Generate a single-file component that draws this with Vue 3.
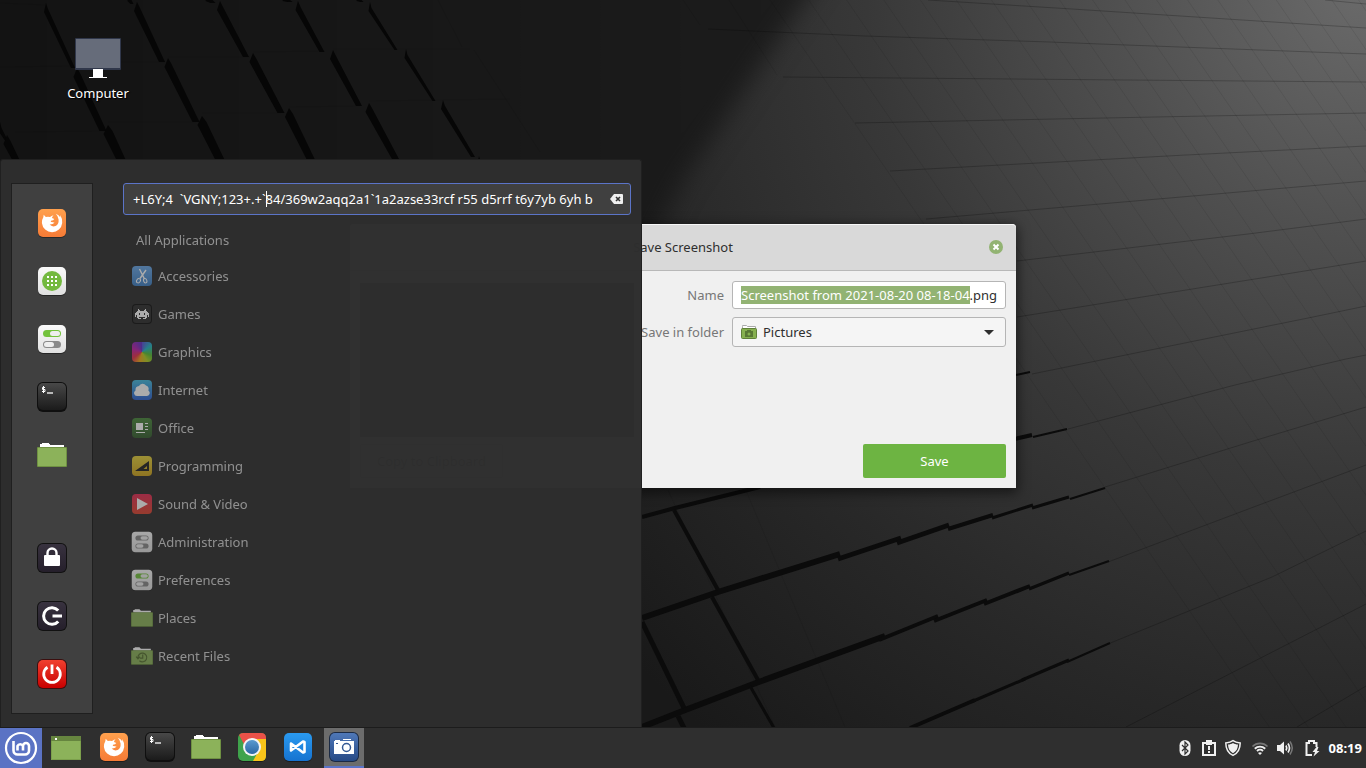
<script setup>
import { onMounted, ref } from 'vue'

const launchers = [
  { id: 'firefox', label: 'Firefox' },
  { id: 'software', label: 'Software Manager' },
  { id: 'settings', label: 'System Settings' },
  { id: 'terminal', label: 'Terminal' },
  { id: 'folder', label: 'Files' }
]
const session = [
  { id: 'lock', label: 'Lock Screen' },
  { id: 'logout', label: 'Log Out' },
  { id: 'power', label: 'Quit' }
]
const categories = [
  { id: 'accessories', label: 'Accessories' },
  { id: 'games', label: 'Games' },
  { id: 'graphics', label: 'Graphics' },
  { id: 'internet', label: 'Internet' },
  { id: 'office', label: 'Office' },
  { id: 'programming', label: 'Programming' },
  { id: 'video', label: 'Sound & Video' },
  { id: 'admin', label: 'Administration' },
  { id: 'settings', label: 'Preferences' },
  { id: 'folder', label: 'Places' },
  { id: 'recent', label: 'Recent Files' }
]
const panelApps = [
  { id: 'firefox', label: 'Firefox' },
  { id: 'terminal', label: 'Terminal' },
  { id: 'folder', label: 'Files' },
  { id: 'chrome', label: 'Google Chrome' },
  { id: 'vscode', label: 'Visual Studio Code' },
  { id: 'camera', label: 'Screenshot', active: true }
]
const tray = [
  { id: 'bluetooth', label: 'Bluetooth' },
  { id: 'clipboard', label: 'Reports' },
  { id: 'shield', label: 'Updates' },
  { id: 'wifi', label: 'Network' },
  { id: 'sound', label: 'Sound' },
  { id: 'battery', label: 'Battery' }
]

const wedges = [
  [46, 3, 73, 68, 4], [137, 2, 162, 62, 6], [220, 1, 246, 57, 6], [298, 1, 322, 52, 5], [370, 2, 396, 50, 3],
  [77, 68, 103, 131, 7], [168, 58, 196, 122, 7], [253, 53, 281, 113, 7], [333, 50, 359, 106, 6], [406, 49, 434, 101, 3],
  [0, 122, 6, 140, 3], [7, 135, 18, 164, 7], [108, 125, 124, 166, 9], [202, 116, 223, 166, 9],
  [289, 108, 314, 166, 8], [369, 103, 396, 160, 7], [443, 100, 473, 157, 4], [479, 156, 484, 166, 4],
  [129, -8, 132, 4, 3], [208, -8, 213, 3, 5], [285, -8, 290, 2, 5], [358, -8, 362, 2, 3]
].map(([x1, y1, x2, y2, w]) => `${x1},${y1} ${x1 + w / 2},${y1 + 6} ${x2 + w / 2},${y2} ${x2 - w / 2},${y2} ${x1 - w / 2},${y1 + 9}`)

const rows = [
  '1325,0 1366,4', '928,0 1072,9 1366,28', '708,29 865,36 1050,42 1100,44 1366,54', '783,77 1127,80 1366,82',
  '855,123 1155,117 1366,113', '890,171 1186,155 1366,146', '926,219 1216,194 1366,181',
  '1017,261 1248,234 1366,219', '1017,317 1280,275 1366,261', '1032,374 1313,317 1366,306',
  '1068,429 1235,385 1346,359 1366,355', '1105,487 1250,442 1366,407', '1108,562 1182,534 1251,508 1366,465',
  '1108,644 1272,577 1366,531', '1126,727 1366,604', '1297,727 1366,686'
]
const seams = Array.from({ length: 24 }, (_, i) => {
  const x = 770 + 39 * i - i * i * 0.35
  return [x, 0, x + 500, 728]
})
const leftSeams = [
  '0,3 46,5', '0,67 73,66', '77,62 165,62', '168,57 250,57', '253,52 325,51', '333,49 470,49',
  '15,132 105,131', '108,122 196,122', '202,113 281,113', '289,107 360,106', '369,101 510,99',
  '438,0 462,47', '474,50 540,152', '683,0 700,25', '729,0 777,75', '668,490 775,727', '745,488 845,727'
]
const slabs = [
  ['642,517 675,508 760,487', 4], ['642,618 718,592 840,554', 6], ['838,559 901,538', 5], ['897,543 949,525', 5],
  ['948,529 993,515', 4], ['992,518 1033,505', 3], ['1032,508 1069,497', 3], ['1070,499 1105,488', 2],
  ['642,727 680,712 756,683 885,636', 6], ['879,640 938,616', 4], ['934,621 987,600', 4], ['984,604 1030,586', 4],
  ['1029,589 1069,573', 3], ['1069,575 1109,561', 2], ['910,728 975,700', 4], ['971,702 1025,679', 3],
  ['1022,680 1069,660', 3], ['1067,662 1110,643', 2], ['674,510 718,590', 4], ['712,597 758,680', 4],
  ['750,686 774,728', 3], ['642,622 684,708', 5], ['678,716 684,728', 5], ['1016,375 1030,372', 2],
  ['1010,440 1032,435', 4], ['1033,437 1067,429', 2]
]

const query = ref('+L6Y;4  `VGNY;123+.+`84/369w2aqq2a1`1a2azse33rcf r55 d5rrf t6y7yb 6yh b')
const fileName = ref('Screenshot from 2021-08-20 08-18-04.png')
const nameInput = ref(null)

onMounted(() => {
  nameInput.value.focus()
  nameInput.value.setSelectionRange(0, fileName.value.lastIndexOf('.'))
})
</script>

<template>
  <div class="desktop">
    <svg class="defs" aria-hidden="true">
      <defs>
        <linearGradient id="gOrange" x2="0" y2="1"><stop stop-color="#ffa04d" /><stop offset="1" stop-color="#f67b36" /></linearGradient>
        <linearGradient id="gWhite" x2="0" y2="1"><stop stop-color="#fafafa" /><stop offset="1" stop-color="#e0e0e0" /></linearGradient>
        <linearGradient id="gBlack" x2="0" y2="1"><stop stop-color="#484848" /><stop offset="1" stop-color="#1b1b1b" /></linearGradient>
        <linearGradient id="gPlum" x2="0" y2="1"><stop stop-color="#38323f" /><stop offset="1" stop-color="#251f2b" /></linearGradient>
        <linearGradient id="gRed" x2="0" y2="1"><stop stop-color="#f0402f" /><stop offset="1" stop-color="#c90000" /></linearGradient>
        <linearGradient id="gBlue" x2="0" y2="1"><stop stop-color="#6aa9ea" /><stop offset="1" stop-color="#3f80c4" /></linearGradient>
        <linearGradient id="gNet" x2="0" y2="1"><stop stop-color="#45bde0" /><stop offset="1" stop-color="#2e62d2" /></linearGradient>
        <linearGradient id="gGreen" x2="0" y2="1"><stop stop-color="#4a8a3c" /><stop offset="1" stop-color="#355e2f" /></linearGradient>
        <linearGradient id="gYellow" x2="0" y2="1"><stop stop-color="#e6d23c" /><stop offset="1" stop-color="#d0a41c" /></linearGradient>
        <linearGradient id="gRose" x2="0" y2="1"><stop stop-color="#e62c56" /><stop offset="1" stop-color="#dd4630" /></linearGradient>
        <linearGradient id="gCode" x2="0" y2="1"><stop stop-color="#2a9af0" /><stop offset="1" stop-color="#1673d0" /></linearGradient>
        <linearGradient id="gCam" x2="0" y2="1"><stop stop-color="#4f78b8" /><stop offset="1" stop-color="#274a86" /></linearGradient>
        <linearGradient id="gBall" x2="0" y2="1"><stop stop-color="#5b9bd0" /><stop offset="1" stop-color="#2c68a4" /></linearGradient>
      </defs>

      <symbol id="firefox" viewBox="0 0 30 30">
        <rect x="1" y="2" width="28" height="28" rx="5" fill="#000" opacity=".35" />
        <rect x="1" y="1" width="28" height="28" rx="5" fill="url(#gOrange)" />
        <path fill="#fff" d="M6.700 6.800 8.800 9Q11 8.600 13 9q1.500-1.400 3.500-1.800Q15 8.600 15 10l2.300 1q-.8 1.400-3.300 1.800l-.2 1.200q2.200-.1 3.800.8-2.100 2-5 1.800 2.400 2.700 6 1.400 3.400-1.800 3-6.500-.3-3.200-2.800-5.700Q22 7 23.200 9.200V7q2.300 3.500 2 8a10.200 10.200 0 0 1-20.300 0q-.1-3.500 1.400-5.800z" />
      </symbol>
      <symbol id="software" viewBox="0 0 30 30">
        <rect x="1" y="2" width="28" height="28" rx="5" fill="#000" opacity=".4" />
        <rect x="1" y="1" width="28" height="28" rx="5" fill="url(#gWhite)" />
        <circle cx="15" cy="15" r="10" fill="#73b93f" />
        <path fill="#fff" d="M10 10h2v2h-2zm4 0h2v2h-2zm4 0h2v2h-2zM10 14h2v2h-2zm4 0h2v2h-2zm4 0h2v2h-2zM10 18h2v2h-2zm4 0h2v2h-2zm4 0h2v2h-2z" />
      </symbol>
      <symbol id="settings" viewBox="0 0 30 30">
        <rect x="1" y="2" width="28" height="28" rx="5" fill="#000" opacity=".4" />
        <rect x="1" y="1" width="28" height="28" rx="5" fill="url(#gWhite)" />
        <rect x="6" y="6" width="18" height="7" rx="3.500" fill="#73c23c" /><rect x="13" y="7" width="10" height="5" rx="2.500" fill="#eee" />
        <rect x="6" y="17" width="18" height="7" rx="3.500" fill="#8a8a8a" /><rect x="7" y="18" width="10" height="5" rx="2.500" fill="#eee" />
      </symbol>
      <symbol id="admin" viewBox="0 0 30 30">
        <rect x="1" y="1" width="28" height="28" rx="5" fill="url(#gWhite)" />
        <rect x="6" y="6" width="18" height="7" rx="3.500" fill="#8a8a8a" /><rect x="13" y="7" width="10" height="5" rx="2.500" fill="#eee" />
        <rect x="6" y="17" width="18" height="7" rx="3.500" fill="#8a8a8a" /><rect x="7" y="18" width="10" height="5" rx="2.500" fill="#eee" />
      </symbol>
      <symbol id="terminal" viewBox="0 0 30 30">
        <rect width="30" height="30" rx="6" fill="#0f0f0f" />
        <rect x="1" y="1" width="28" height="27" rx="5" fill="url(#gBlack)" />
        <path d="M8 5.500H5.500v2H8v2H5M6.500 4v7" stroke="#fff" fill="none" /><path d="M10 11h6" stroke="#fff" stroke-width="1.300" />
      </symbol>
      <symbol id="folder" viewBox="0 0 30 30">
        <path d="M3 8V4h2V3h7v1h1v1h14v4z" fill="#fff" />
        <rect y="7" width="30" height="20" rx="1" fill="#6f9142" /><rect x="1" y="8" width="28" height="18" fill="#8cb25a" />
      </symbol>
      <symbol id="recent" viewBox="0 0 30 30">
        <path d="M3 8V4h2V3h7v1h1v1h14v4z" fill="#fff" />
        <rect y="7" width="30" height="20" rx="1" fill="#6f9142" /><rect x="1" y="8" width="28" height="18" fill="#8cb25a" />
        <path d="M9.500 17.500a6 6 0 1 1 2 4M7 16l2.500 3 2.500-3M16 13v5h-4" fill="none" stroke="#567030" stroke-width="1.600" />
      </symbol>
      <symbol id="lock" viewBox="0 0 30 30">
        <rect width="30" height="30" rx="6" fill="#111" /><rect x="1" y="1" width="28" height="28" rx="5" fill="url(#gPlum)" />
        <rect x="7" y="12" width="16" height="11" rx="1" fill="#fff" /><path d="M10.500 13v-3a4.500 4.500 0 0 1 9 0v3" fill="none" stroke="#fff" stroke-width="2.400" />
      </symbol>
      <symbol id="logout" viewBox="0 0 30 30">
        <rect width="30" height="30" rx="6" fill="#111" /><rect x="1" y="1" width="28" height="28" rx="5" fill="url(#gPlum)" />
        <path d="M21.200 9.600a8.300 8.300 0 1 0 0 10.800" fill="none" stroke="#fff" stroke-width="3" /><path d="M15.500 15H25" stroke="#fff" stroke-width="3" />
      </symbol>
      <symbol id="power" viewBox="0 0 30 30">
        <rect width="30" height="30" rx="6" fill="#3c0f0f" /><rect x="1" y="1" width="28" height="28" rx="5" fill="url(#gRed)" />
        <path d="M10.500 8.200a8.300 8.300 0 1 0 9 0M15 5.500V15" fill="none" stroke="#fff" stroke-width="2.800" />
      </symbol>
      <symbol id="accessories" viewBox="0 0 20 20">
        <rect width="20" height="20" rx="4" fill="url(#gBlue)" />
        <path d="m7.500 3 5 10M14 4l-6 8.500" stroke="#fff" stroke-width="1.400" /><ellipse cx="6.500" cy="14.800" rx="1.800" ry="2.300" fill="none" stroke="#fff" transform="rotate(35 6.500 14.800)" /><ellipse cx="13.300" cy="14.800" rx="1.600" ry="2.300" fill="none" stroke="#fff" transform="rotate(-20 13 15)" />
      </symbol>
      <symbol id="games" viewBox="0 0 20 20">
        <rect width="20" height="20" rx="4" fill="#101010" /><rect x="1" y="1" width="18" height="18" rx="3" fill="#2d2d2d" />
        <path fill="#fff" fill-rule="evenodd" d="M6 5h1v1h1v1h4V6h1V5h1v2h1v1h1v1h1v4h-1v-2h-1v3h-1v1h-3v-1h2v-1H7v1h2v1H6v-1H5v-3H4v2H3V9h1V8h1V7h1zm1 4v2h1V9zm5 0v2h1V9z" />
      </symbol>
      <symbol id="internet" viewBox="0 0 20 20">
        <rect width="20" height="20" rx="4" fill="url(#gNet)" />
        <path fill="#fff" d="M5 16a3 3 0 0 1-1.500-5.600A4 4 0 0 1 7 6a4 4 0 0 1 7-.5 4 4 0 0 1 2.400 5A3 3 0 0 1 15 16z" />
      </symbol>
      <symbol id="office" viewBox="0 0 20 20">
        <rect width="20" height="20" rx="4" fill="url(#gGreen)" />
        <path fill="#fff" d="M4 5h7v7H4zm9 0h3v1h-3zm0 3h3v1h-3zm0 3h3v1h-3zm-9 3h9v1H4z" />
      </symbol>
      <symbol id="programming" viewBox="0 0 20 20">
        <rect width="20" height="20" rx="4" fill="url(#gYellow)" /><path fill="#222" fill-rule="evenodd" d="M3 15 17 5v10zm8.500-2H15v-3z" />
      </symbol>
      <symbol id="video" viewBox="0 0 20 20">
        <rect width="20" height="20" rx="4" fill="url(#gRose)" /><path fill="#fff" d="m5 4 11 6-11 6z" />
      </symbol>
      <symbol id="chrome" viewBox="0 0 30 30">
        <rect x="1" y="2" width="28" height="28" rx="5" fill="#000" opacity=".4" />
        <rect x="1" y="1" width="28" height="28" rx="5" fill="#3fa34b" />
        <path d="M15 7h14v17q0 5-5 5h-8l6-11z" fill="#f9c51a" />
        <path d="M2 3q1.500-2 4-2h18q5 0 5 5v1H15l-7 7z" fill="#ea5148" />
        <circle cx="15" cy="15" r="9" fill="#f4f4f4" /><circle cx="15" cy="15" r="7" fill="url(#gBall)" />
      </symbol>
      <symbol id="vscode" viewBox="0 0 30 30">
        <rect x="1" y="2" width="28" height="28" rx="5" fill="#000" opacity=".4" /><rect x="1" y="1" width="28" height="28" rx="5" fill="url(#gCode)" />
        <path fill="none" stroke="#fff" stroke-width="2.600" stroke-linejoin="round" d="M8 11.500 20 20.500 21.500 20V10L20 9.500 8 18.500z" />
      </symbol>
      <symbol id="camera" viewBox="0 0 30 30">
        <rect width="30" height="30" rx="6" fill="#1b2a44" /><rect x="1" y="1" width="28" height="28" rx="5" fill="url(#gCam)" />
        <path fill="#fff" d="M5 9h1V8h5v1h14v13H5zM14 7h8v1h-8z" /><circle cx="17.500" cy="15.500" r="4" fill="#fff" stroke="#345994" stroke-width="1.500" /><path fill="#345994" d="M7 11h2v1H7z" />
      </symbol>
      <symbol id="bluetooth" viewBox="0 0 20 20">
        <rect x="4.500" y="2" width="11" height="16" rx="5.500" fill="#f0f0f0" /><path d="m7 7 6 6-3 3V4l3 3-6 6" fill="none" stroke="#2f2f2f" stroke-width="1.200" />
      </symbol>
      <symbol id="clipboard" viewBox="0 0 20 20">
        <path fill="#f0f0f0" fill-rule="evenodd" d="M3 4h4V2h6v2h4v14H3zm2 2v10h10V6h-2v1H7V6zM9 8h2v4H9zm0 5h2v2H9z" />
      </symbol>
      <symbol id="shield" viewBox="0 0 20 20">
        <path fill="none" stroke="#f0f0f0" stroke-width="1.500" d="M10 2.700c2 1.500 4 2 7.200 2.200 0 6-2 10-7.200 12.500C4.800 15 2.800 11 2.800 4.900 6 4.700 8 4.200 10 2.700z" /><path fill="#f0f0f0" d="M10 5c1.500 1 3 1.400 5 1.600-.2 4-1.500 6.800-5 8.700-3.500-1.900-4.800-4.700-5-8.700C7 6.400 8.500 6 10 5z" />
      </symbol>
      <symbol id="wifi" viewBox="0 0 20 20">
        <path fill="none" stroke="#777" stroke-width="1.700" d="M2.500 8.500a10.500 10.500 0 0 1 15 0" /><path fill="none" stroke="#f0f0f0" stroke-width="1.900" d="M4.800 10.700a7.500 7.500 0 0 1 10.400 0M7 13a4.400 4.400 0 0 1 6 0" /><path fill="#f0f0f0" d="m10 17-2-2q2-1.600 4 0z" />
      </symbol>
      <symbol id="sound" viewBox="0 0 20 20">
        <path fill="#f0f0f0" d="M2 7h3l4-3.500v13L5 13H2z" /><path fill="none" stroke="#f0f0f0" stroke-width="1.700" d="M11 7.500q1.500 2.500 0 5M13 5.500q3 4.500 0 9" /><path fill="none" stroke="#777" stroke-width="1.500" d="M15 3.500q4.500 6.500 0 13" />
      </symbol>
      <symbol id="battery" viewBox="0 0 20 20">
        <path fill="none" stroke="#f0f0f0" stroke-width="2" d="M14.500 9V5H12V3H7v2H4.500v12H10" /><path fill="#f0f0f0" d="m14.500 9-4 5H13l-1.500 4.500 6-5.500H15l1.500-4z" />
      </symbol>
    </svg>

    <svg class="wallpaper" viewBox="0 0 1366 768" preserveAspectRatio="xMidYMid slice" aria-hidden="true">
      <defs>
        <radialGradient id="light" gradientUnits="userSpaceOnUse" cx="1366" cy="-20" r="1000">
          <stop stop-color="#6b6b6b" /><stop offset=".25" stop-color="#505050" /><stop offset=".5" stop-color="#383838" /><stop offset=".74" stop-color="#282828" /><stop offset="1" stop-color="#191919" />
        </radialGradient>
        <linearGradient id="shade" gradientUnits="userSpaceOnUse" x1="0" y1="0" x2="800" y2="0"><stop stop-color="#131313" /><stop offset=".6" stop-color="#181818" /><stop offset="1" stop-color="#1c1c1c" /></linearGradient>
        <filter id="soft" x="-10%" y="-10%" width="120%" height="120%" color-interpolation-filters="sRGB"><feGaussianBlur stdDeviation="12" /></filter>
      </defs>
      <rect width="1366" height="768" fill="url(#light)" />
      <path d="M-60-60H845L683 180 560 420-60 700z" fill="url(#shade)" filter="url(#soft)" />
      <polyline v-for="p in leftSeams" :key="p" :points="p" class="seam" />
      <line v-for="(s, i) in seams" :key="i" :x1="s[0]" :y1="s[1]" :x2="s[2]" :y2="s[3]" class="seam" />
      <polyline v-for="p in rows" :key="p" :points="p" class="row-seam" />
      <polygon v-for="p in wedges" :key="p" :points="p" fill="#060606" />
      <polyline v-for="s in slabs" :key="s[0]" :points="s[0]" fill="none" stroke="#0b0b0b" :stroke-width="s[1]" />
    </svg>

    <a class="shortcut" href="#computer">
      <svg viewBox="0 0 46 42" aria-hidden="true">
        <rect x="0" y="0" width="46" height="32" rx="1" fill="#30374a" /><rect x="1" y="1" width="44" height="29" fill="#666c7a" />
        <path d="M18 31h10v8h4v1H14v-1h4z" fill="#fff" />
      </svg>
      <span>Computer</span>
    </a>

    <form class="dialog" aria-label="Save Screenshot" @submit.prevent>
      <header class="titlebar">
        <h1>Save Screenshot</h1>
        <button type="button" class="close" aria-label="Close">
          <svg viewBox="0 0 14 14"><circle cx="7" cy="7" r="7" fill="#92b372" /><path d="m4.500 4.500 5 5m0-5-5 5" stroke="#fff" stroke-width="2" /></svg>
        </button>
      </header>
      <div class="body">
        <div class="preview"></div>
        <div class="fields">
          <label for="name">Name</label>
          <input id="name" ref="nameInput" v-model="fileName" type="text" spellcheck="false" />
          <label for="folder-select">Save in folder</label>
          <div class="select-box">
            <select id="folder-select"><option>Pictures</option></select>
            <svg class="pic" viewBox="0 0 16 14"><path d="M1.500 4V1.500V.5h4l1 1h8V5" fill="#fff" stroke="#aaa" /><rect x=".5" y="3.500" width="15" height="10" rx="1" fill="#86b04f" stroke="#5f8038" /><path d="M4 6h2V5h4v1h2v6H4z" fill="#587734" /><circle cx="8" cy="9" r="1.500" fill="#86b04f" /></svg>
            <svg class="arrow" viewBox="0 0 10 5"><path d="M0 0h10L5 5z" fill="#2e2e2e" /></svg>
          </div>
        </div>
      </div>
      <footer>
        <button type="button" class="copy">Copy to Clipboard</button>
        <button type="submit" class="save">Save</button>
      </footer>
    </form>

    <section class="menu" aria-label="Applications menu">
      <nav class="sidebar" aria-label="Favorites">
        <button v-for="l in launchers" :key="l.id" type="button" :aria-label="l.label"><svg><use :href="'#' + l.id" /></svg></button>
        <span class="grow"></span>
        <button v-for="l in session" :key="l.id" type="button" :aria-label="l.label"><svg><use :href="'#' + l.id" /></svg></button>
      </nav>
      <div class="main">
        <div class="search">
          <input v-model="query" type="text" aria-label="Search" spellcheck="false" />
          <span class="caret"></span>
          <button type="button" aria-label="Clear search">
            <svg viewBox="0 0 13 10"><path d="M4 0h8q1 0 1 1v8q0 1-1 1H4L0 5z" fill="#efefef" /><path d="m6 3 4 4m0-4L6 7" stroke="#333" stroke-width="1.600" /></svg>
          </button>
        </div>
        <ul>
          <li class="all"><button type="button">All Applications</button></li>
          <li v-for="c in categories" :key="c.label">
            <button type="button">
              <span v-if="c.id === 'graphics'" class="wheel"></span>
              <svg v-else :class="{ wide: c.id === 'folder' || c.id === 'recent' || c.id === 'settings' || c.id === 'admin' }"><use :href="'#' + c.id" /></svg>
              <span>{{ c.label }}</span>
            </button>
          </li>
        </ul>
      </div>
    </section>

    <footer class="panel">
      <button type="button" class="mint" aria-label="Menu">
        <svg viewBox="0 0 42 40"><g fill="none" stroke="#fff"><circle cx="21" cy="20" r="15" stroke-width="2.200" /><path stroke-width="2.600" d="M13.500 13v9.500a4 4 0 0 0 4 4h7.500a4 4 0 0 0 4-4V18a3 3 0 0 0-6 0v4.500M23 18a3 3 0 0 0-5.500 0v4.500" /></g></svg>
      </button>
      <button type="button" class="show" aria-label="Show desktop">
        <svg viewBox="0 0 30 24"><rect width="30" height="24" fill="#7ca04c" /><rect x="1" y="5" width="28" height="18" fill="#8cb25a" /><rect width="30" height="5" fill="#66853f" /><rect x="4" y="2" width="2" height="2" fill="#fff" /></svg>
      </button>
      <div class="apps">
        <button v-for="a in panelApps" :key="a.id" type="button" :class="{ active: a.active }" :aria-label="a.label"><svg><use :href="'#' + a.id" /></svg></button>
      </div>
      <div class="tray">
        <button v-for="t in tray" :key="t.id" type="button" :class="t.id" :aria-label="t.label"><svg><use :href="'#' + t.id" /></svg></button>
        <time datetime="08:19">08:19</time>
      </div>
    </footer>
  </div>
</template>

<style>
body { margin: 0; overflow: hidden; background: #181818; }
</style>

<style scoped>
.desktop { position: relative; display: flex; flex-direction: column; justify-content: flex-end; height: 100vh; overflow: hidden; font-family: "Noto Sans", "Open Sans", sans-serif; font-size: 13px; line-height: 18px; }
.desktop * { box-sizing: border-box; }
button, input, select { font: inherit; color: inherit; margin: 0; }
button { display: flex; align-items: center; justify-content: center; padding: 0; border: 0; background: none; }
svg { display: block; flex: none; }
.defs { position: absolute; width: 0; height: 0; }
.wallpaper { position: absolute; inset: 0; width: 100%; height: 100%; }
.seam { fill: none; stroke: #000; stroke-opacity: .08; stroke-width: 1; }
.row-seam { fill: none; stroke: #000; stroke-opacity: .22; stroke-width: 1; }

.shortcut { position: absolute; left: 58px; top: 38px; width: 80px; display: flex; flex-direction: column; align-items: center; gap: 4px; color: #fff; text-decoration: none; text-shadow: 1px 1px 1px #000; }
.shortcut svg { width: 46px; height: 42px; }

.dialog { position: absolute; left: 50%; top: 224px; width: 666px; margin-left: -333px; border-radius: 4px 4px 0 0; background: #f0f0f0; box-shadow: 0 3px 12px 2px rgba(0, 0, 0, .5); color: #2f2f2f; }
.titlebar { display: grid; grid-template-columns: 1fr auto 1fr; align-items: center; height: 47px; padding: 0 13px 2px; border-top: 1px solid #f7f7f7; border-bottom: 1px solid #b8b8b8; border-radius: 4px 4px 0 0; background: #d9d9d9; }
.titlebar h1 { grid-column: 2; margin: 0; font-size: 13px; font-weight: 400; }
.close { justify-self: end; }
.close svg { width: 14px; height: 14px; }
.body { display: grid; grid-template-columns: 274px 1fr; gap: 4px; padding: 10px 10px 0; height: 173px; }
.preview { height: 154px; margin-top: 2px; background: #262626; }
.fields { display: grid; grid-template-columns: 1fr 274px; grid-template-rows: 28px 30px; gap: 8px; align-items: center; }
.fields label { text-align: right; color: #777; white-space: nowrap; }
.fields input { width: 100%; height: 28px; padding: 0 8px; border: 1px solid #b5b5b5; border-radius: 3px; background: #fff; outline: none; }
.fields input::selection { background: rgba(146, 179, 114, .996); color: #fff; }
.select-box { position: relative; }
.select-box select { width: 100%; height: 30px; padding: 0 30px; appearance: none; border: 1px solid #b5b5b5; border-radius: 3px; background: #f5f5f5; }
.pic { position: absolute; left: 9px; top: 8px; width: 16px; height: 14px; }
.arrow { position: absolute; right: 12px; top: 13px; width: 10px; height: 5px; }
.dialog footer { display: flex; justify-content: space-between; padding: 0 10px 10px; }
.dialog footer button { width: 143px; height: 34px; border-radius: 2px; }
.copy { border: 1px solid #b5b5b5; background: #f5f5f5; }
.save { background: #6db442; color: #fff; }

.menu { position: relative; display: flex; gap: 30px; width: 642px; height: 568px; padding: 23px 10px 13px 10px; border: 1px solid #202020; border-bottom: 0; border-radius: 3px 3px 0 0; background: rgba(46, 46, 46, .988); }
.sidebar { display: flex; flex-direction: column; gap: 28px; width: 82px; padding: 24px 0; border: 1px solid #1f1f1f; background: #404040; align-items: center; }
.sidebar svg { width: 30px; height: 30px; }
.grow { flex: 1; margin: -28px 0; }
.main { flex: 1; min-width: 0; }
.search { position: relative; display: flex; align-items: center; height: 32px; padding-right: 7px; border: 1px solid #5b74c8; border-radius: 3px; background: #404040; color: #fff; }
.search input { flex: 1; min-width: 0; height: 28px; margin-left: 9px; padding: 0; border: 0; outline: 0; background: none; }
.search button { margin-left: 6px; }
.search button svg { width: 13px; height: 10px; }
.caret { position: absolute; left: 142px; top: 7px; width: 1px; height: 16px; background: #fff; }
ul { margin: 8px 0 0; padding: 0; list-style: none; color: #d2d2d2; }
li { display: flex; align-items: center; height: 38px; padding-left: 9px; }
li.all { height: 34px; padding-left: 13px; }
li button { gap: 6px; opacity: .6; }
li svg, .wheel { width: 20px; height: 20px; }
li svg.wide { width: 22px; height: 22px; margin: 0 -1px; }
.wheel { border-radius: 4px; background: conic-gradient(from 0deg, #5a4ed8, #22b8c8, #58c030 110deg, #b6d020 150deg, #f0a818 195deg, #e8304a 235deg, #c020a8 290deg, #5a30c8); }

.panel { position: relative; display: flex; height: 41px; border-top: 1px solid #1c1c1c; background: #2f2f2f; color: #fff; }
.mint { width: 42px; background: #5b73c4; }
.mint svg { width: 42px; height: 40px; }
.show { width: 48px; }
.show svg { width: 30px; height: 24px; }
.apps { display: flex; gap: 6px; margin-left: 4px; }
.apps button { width: 40px; padding-bottom: 2px; }
.apps svg { width: 30px; height: 30px; }
.apps .active { padding-bottom: 0; border-bottom: 2px solid #5b74c8; background: #6c6c6c; }
.tray { display: flex; align-items: center; margin-left: auto; padding-right: 4px; }
.tray button { width: 24px; }
.tray .wifi { width: 30px; }
.tray .sound { width: 20px; }
.tray .battery { width: 34px; }
.tray svg { width: 20px; height: 20px; }
.tray time { font-weight: 700; }
</style>
